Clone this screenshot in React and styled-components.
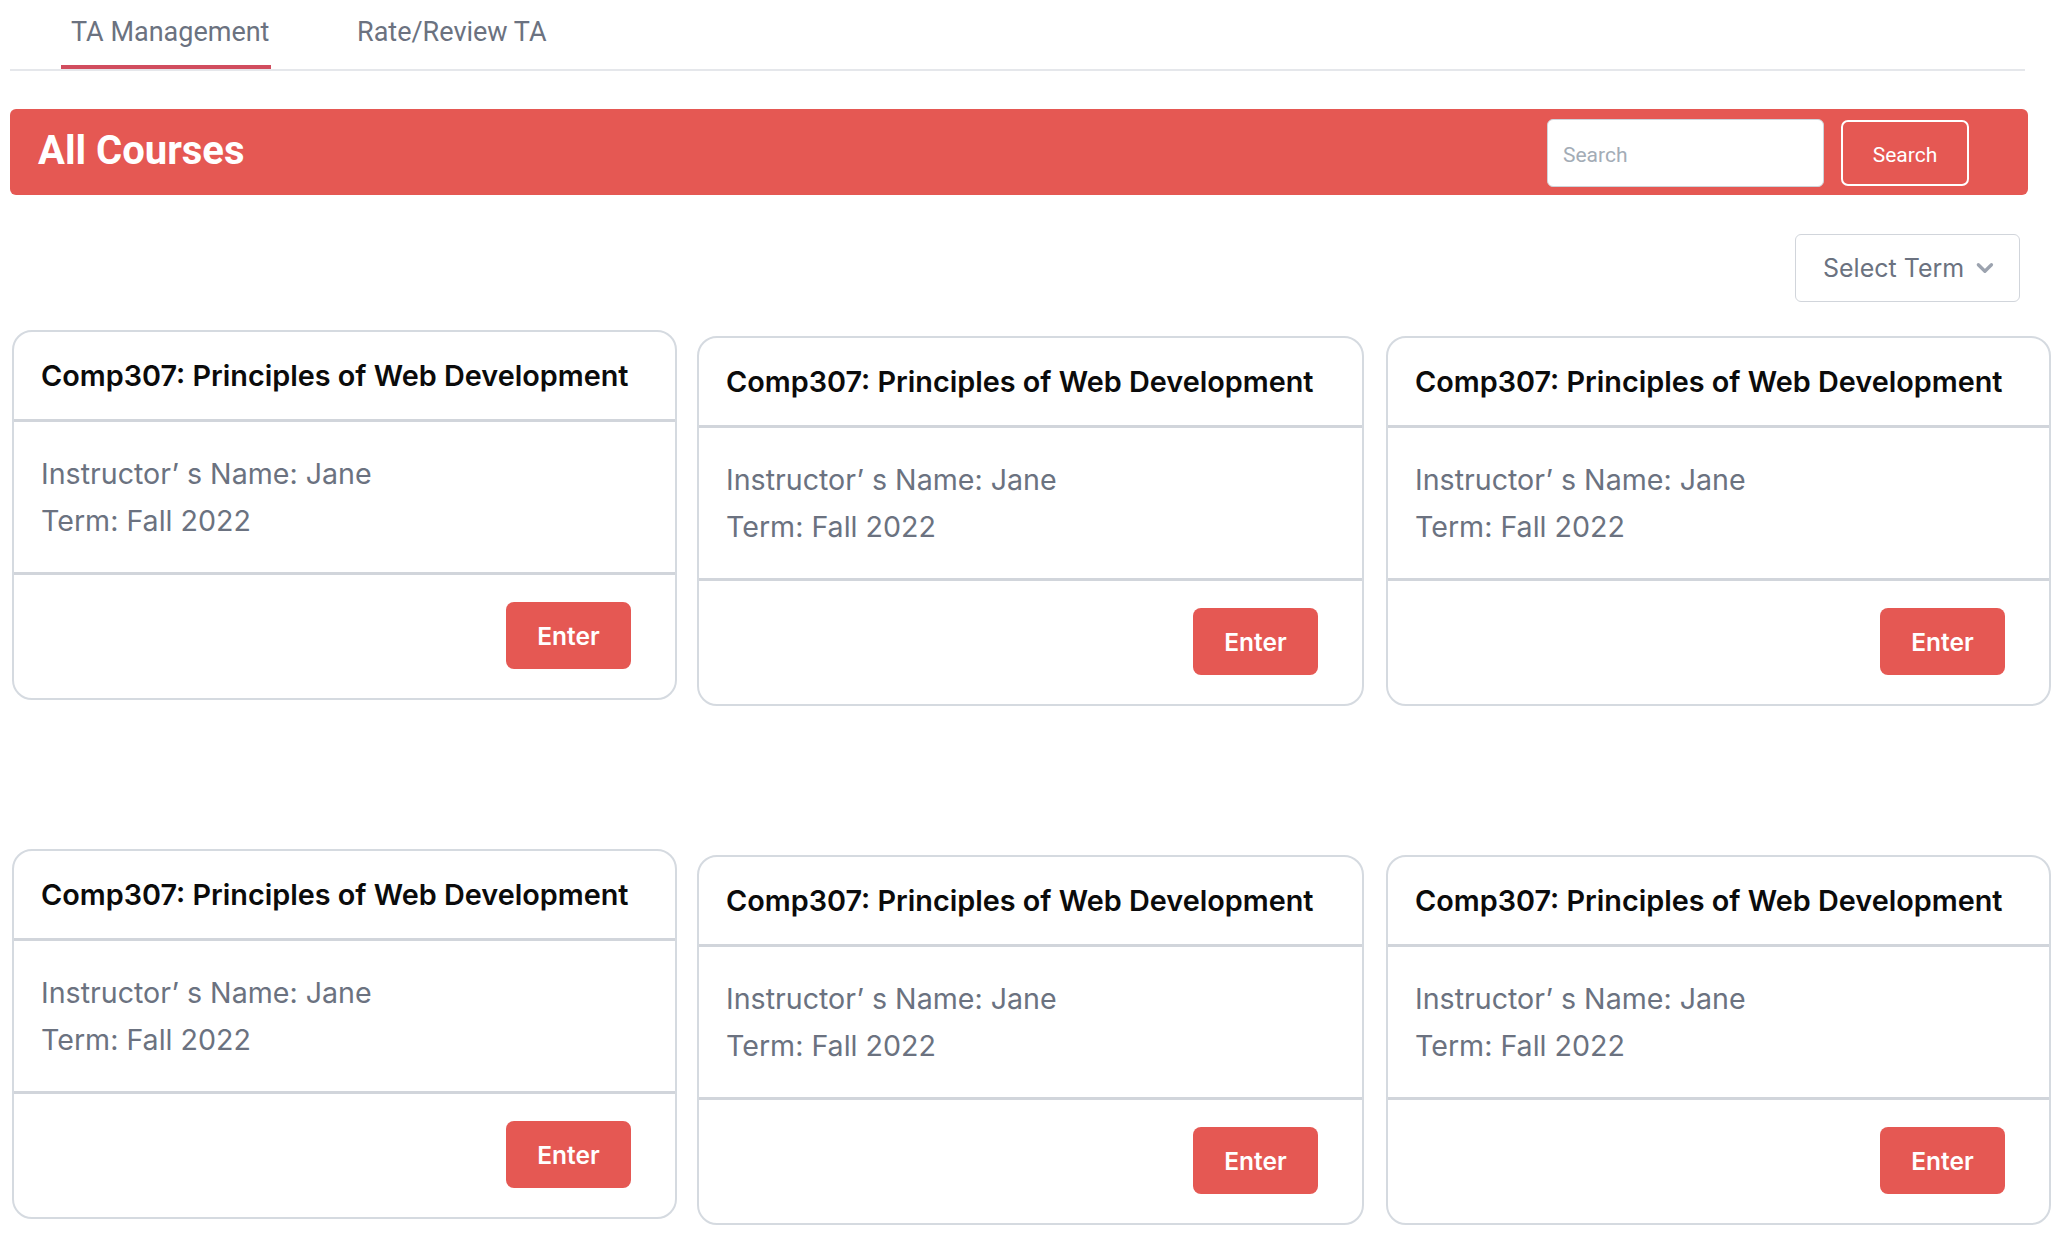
import styled, { createGlobalStyle } from "styled-components";

const GlobalStyle = createGlobalStyle`
  body {
    margin: 0;
    background: #fff;
    font-family: Roboto, "Liberation Sans", sans-serif;
  }
  * { box-sizing: border-box; }
`;

const Page = styled.div`
  width: 2064px;
  display: flex;
  flex-direction: column;
`;

const TabBar = styled.nav`
  margin-left: 10px;
  width: 2015px;
  display: flex;
  align-items: flex-end;
  gap: 76px;
  padding-left: 51px;
  border-bottom: 2px solid #e5e7eb;
`;

const Tab = styled.button`
  background: none;
  border: none;
  padding: 16px 0 17px 10px;
  width: ${(p) => p.$width}px;
  font-family: Roboto, "Liberation Sans", sans-serif;
  font-size: 27px;
  line-height: 32px;
  color: #6b7280;
  text-align: left;
  white-space: nowrap;
  border-bottom: 4px solid ${(p) => (p.$active ? "#d14d5e" : "transparent")};
  cursor: pointer;
`;

const Banner = styled.header`
  margin: 38px 0 0 10px;
  width: 2018px;
  height: 86px;
  background: #e55853;
  border-radius: 6px;
  display: flex;
  align-items: center;
  justify-content: space-between;
  padding: 0 59px 0 28px;
`;

const BannerTitle = styled.h1`
  margin: 0 0 3px;
  font-family: Roboto, "Liberation Sans", sans-serif;
  font-weight: 700;
  font-size: 40px;
  line-height: 40px;
  color: #fff;
`;

const SearchForm = styled.form`
  display: flex;
  align-items: center;
  gap: 17px;
  padding-top: 2px;
`;

const SearchInput = styled.input`
  width: 277px;
  height: 68px;
  border: 1px solid #ced4da;
  border-radius: 6px;
  padding: 4px 15px 0;
  font-family: Roboto, "Liberation Sans", sans-serif;
  font-size: 21px;
  color: #374151;
  background: #fff;
  outline: none;
  &::placeholder {
    color: #a3acb6;
  }
`;

const SearchButton = styled.button`
  width: 128px;
  height: 66px;
  border: 2px solid #fff;
  border-radius: 7px;
  padding-top: 4px;
  background: transparent;
  color: #fff;
  font-family: Roboto, "Liberation Sans", sans-serif;
  font-size: 21px;
  cursor: pointer;
`;

const FilterRow = styled.div`
  margin: 39px 0 0 10px;
  width: 2010px;
  display: flex;
  justify-content: flex-end;
`;

const TermSelect = styled.button`
  width: 225px;
  height: 68px;
  display: flex;
  align-items: center;
  gap: 12px;
  padding: 0 25px 0 27px;
  border: 1.5px solid #d1d5db;
  border-radius: 6px;
  background: #fff;
  font-family: Inter, "Noto Sans", sans-serif;
  font-size: 25px;
  color: #6b7280;
  white-space: nowrap;
  cursor: pointer;
`;

const CardGrid = styled.section`
  margin: 28px 0 0 12px;
  display: grid;
  grid-template-columns: repeat(3, 665px);
  column-gap: 22px;
  row-gap: 143px;
  align-items: start;
`;

const Card = styled.article`
  margin-top: ${(p) => (p.$lowered ? 6 : 0)}px;
  margin-left: ${(p) => p.$shift || 0}px;
  height: 370px;
  border: 2px solid #d5dae0;
  border-radius: 20px;
  background: #fff;
  display: flex;
  flex-direction: column;
  font-family: Inter, "Noto Sans", sans-serif;
`;

const CardHeader = styled.div`
  height: 90px;
  display: flex;
  align-items: center;
  padding: 0 27px;
  border-bottom: 3px solid #d1d5db;
`;

const CardTitle = styled.h2`
  margin: 0;
  font-size: 28.8px;
  font-weight: 600;
  line-height: 34px;
  color: #0b0b0b;
  white-space: nowrap;
`;

const CardBody = styled.div`
  height: 150px;
  padding: 28px 27px;
`;

const InfoLine = styled.p`
  margin: 0;
  font-size: 28.6px;
  line-height: 47px;
  color: #6b7280;
`;

const CardFooter = styled.div`
  flex: 1;
  display: flex;
  justify-content: flex-end;
  align-items: flex-start;
  padding: 27px 44px 0 0;
  border-top: 3px solid #d1d5db;
`;

const EnterButton = styled.button`
  width: 125px;
  height: 67px;
  border: none;
  border-radius: 8px;
  background: #e55853;
  color: #fff;
  font-family: Inter, "Noto Sans", sans-serif;
  font-size: 24.5px;
  font-weight: 600;
  cursor: pointer;
`;

function Chevron() {
  return (
    <svg width="19" height="12" viewBox="0 0 19 12" fill="none">
      <path
        d="M2.5 2.5l7 7 7-7"
        stroke="#9ca3af"
        strokeWidth="3.5"
        strokeLinecap="round"
        strokeLinejoin="round"
      />
    </svg>
  );
}

const courses = Array.from({ length: 6 }, (_, i) => ({
  id: i,
  title: "Comp307: Principles of Web Development",
  instructor: "Jane",
  term: "Fall 2022",
}));

function CourseCard({ course, column }) {
  return (
    <Card $lowered={column !== 0} $shift={column === 1 ? -2 : 0}>
      <CardHeader>
        <CardTitle>{course.title}</CardTitle>
      </CardHeader>
      <CardBody>
        <InfoLine>Instructor’ s Name: {course.instructor}</InfoLine>
        <InfoLine>Term: {course.term}</InfoLine>
      </CardBody>
      <CardFooter>
        <EnterButton>Enter</EnterButton>
      </CardFooter>
    </Card>
  );
}

export default function App() {
  return (
    <Page>
      <GlobalStyle />
      <TabBar>
        <Tab $active $width={210}>TA Management</Tab>
        <Tab $width={200}>Rate/Review TA</Tab>
      </TabBar>
      <Banner>
        <BannerTitle>All Courses</BannerTitle>
        <SearchForm onSubmit={(e) => e.preventDefault()}>
          <SearchInput placeholder="Search" />
          <SearchButton type="submit">Search</SearchButton>
        </SearchForm>
      </Banner>
      <FilterRow>
        <TermSelect>
          Select Term
          <Chevron />
        </TermSelect>
      </FilterRow>
      <CardGrid>
        {courses.map((c, i) => (
          <CourseCard key={c.id} course={c} column={i % 3} />
        ))}
      </CardGrid>
    </Page>
  );
}
